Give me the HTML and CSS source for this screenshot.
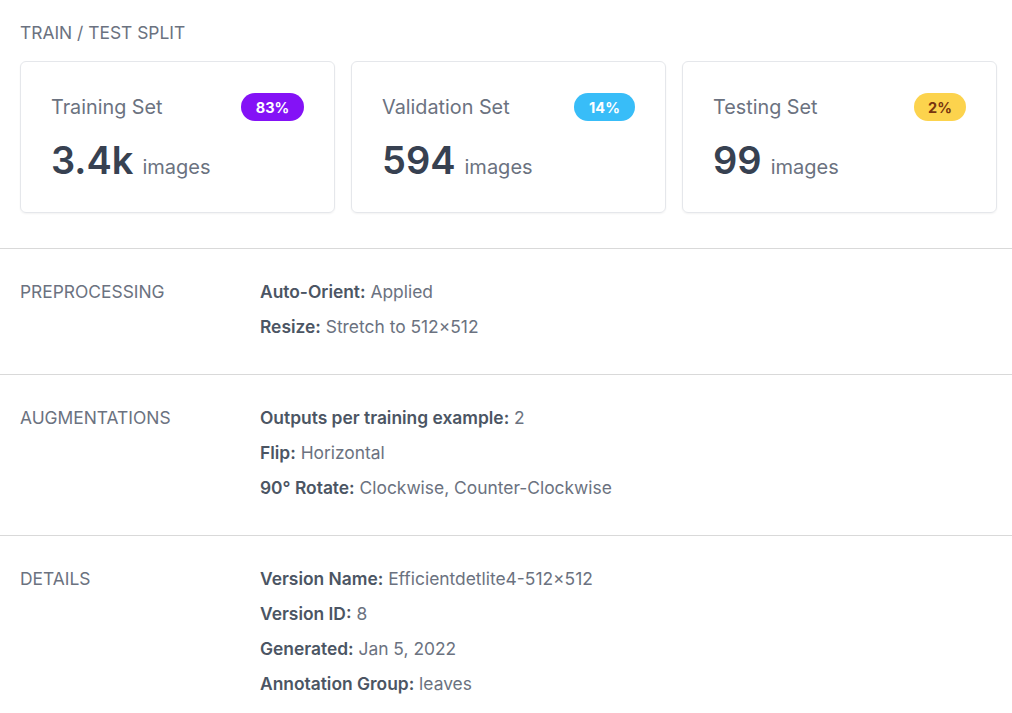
FILE: index.html
```html
<!DOCTYPE html>
<html>
<head>
<meta charset="utf-8">
<link rel="stylesheet" href="styles.css">
</head>
<body>
<div class="split">
  <div class="split-title">TRAIN / TEST SPLIT</div>
  <div class="cards">
    <div class="card">
      <div class="card-head">
        <span class="card-name">Training Set</span>
        <span class="badge badge-purple">83%</span>
      </div>
      <div class="card-count"><span class="num">3.4k</span><span class="unit">images</span></div>
    </div>
    <div class="card">
      <div class="card-head">
        <span class="card-name">Validation Set</span>
        <span class="badge badge-blue">14%</span>
      </div>
      <div class="card-count"><span class="num">594</span><span class="unit">images</span></div>
    </div>
    <div class="card">
      <div class="card-head">
        <span class="card-name">Testing Set</span>
        <span class="badge badge-yellow">2%</span>
      </div>
      <div class="card-count"><span class="num">99</span><span class="unit">images</span></div>
    </div>
  </div>
</div>

<div class="section">
  <div class="section-label">PREPROCESSING</div>
  <div class="section-rows">
    <div class="row"><b>Auto-Orient:</b> Applied</div>
    <div class="row"><b>Resize:</b> Stretch to 512×512</div>
  </div>
</div>

<div class="section">
  <div class="section-label">AUGMENTATIONS</div>
  <div class="section-rows">
    <div class="row"><b>Outputs per training example:</b> 2</div>
    <div class="row"><b>Flip:</b> Horizontal</div>
    <div class="row"><b>90° Rotate:</b> Clockwise, Counter-Clockwise</div>
  </div>
</div>

<div class="section">
  <div class="section-label">DETAILS</div>
  <div class="section-rows">
    <div class="row"><b>Version Name:</b> Efficientdetlite4-512×512</div>
    <div class="row"><b>Version ID:</b> 8</div>
    <div class="row"><b>Generated:</b> Jan 5, 2022</div>
    <div class="row"><b>Annotation Group:</b> leaves</div>
  </div>
</div>
</body>
</html>
```

FILE: styles.css
```css
* { box-sizing: border-box; }
html, body { margin: 0; padding: 0; background: #fff; }
body {
  font-family: Inter, "Noto Sans", sans-serif;
  color: #6b7280;
}
.split {
  padding: 23px 15px 35px 20px;
}
.split-title {
  font-size: 17.4px;
  line-height: 20px;
  color: #6b7280;
  margin-bottom: 18px;
}
.cards {
  display: grid;
  grid-template-columns: 1fr 1fr 1fr;
  gap: 16px;
}
.card {
  border: 1px solid #e5e7eb;
  border-radius: 6px;
  box-shadow: 0 1px 2px rgba(0,0,0,0.05);
  padding: 31px 30px 29px 30px;
  height: 152px;
}
.card-head {
  display: flex;
  justify-content: space-between;
  align-items: center;
  height: 28px;
}
.card-name {
  font-size: 19.8px;
  color: #6b7280;
}
.badge {
  display: inline-flex;
  align-items: center;
  justify-content: center;
  height: 28px;
  padding: 0 14px;
  border-radius: 14px;
  font-size: 14.5px;
  font-weight: 700;
  color: #fff;
  min-width: 52px;
}
.badge-purple { background: #8412f6; min-width: 63px; }
.badge-blue { background: #38bdf8; min-width: 61px; }
.badge-yellow { background: #fcd34d; color: #78350f; min-width: 52px; }
.card-count {
  margin-top: 15px;
  display: flex;
  align-items: baseline;
}
.num {
  font-size: 38px;
  font-weight: 600;
  color: #374151;
  line-height: 48px;
}
.unit {
  font-size: 20px;
  color: #6b7280;
  margin-left: 9px;
}
.section {
  border-top: 1px solid #d9d9d9;
  display: flex;
  padding: 25px 20px 30px 20px;
}
.section-label {
  width: 240px;
  flex: none;
  font-size: 17.4px;
  line-height: 35px;
  color: #6b7280;
}
.section-rows {
  display: flex;
  flex-direction: column;
}
.row {
  font-size: 17.4px;
  line-height: 35px;
  color: #6b7280;
}
.row b {
  font-weight: 600;
  color: #4b5563;
}
```
